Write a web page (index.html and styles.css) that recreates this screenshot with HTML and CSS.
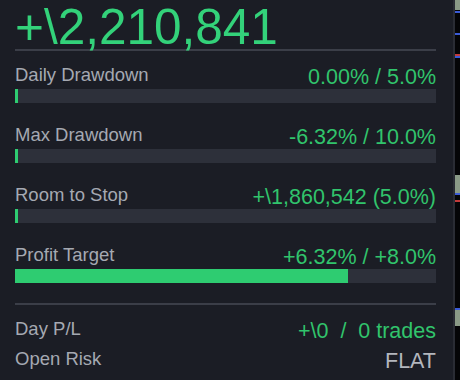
FILE: index.html
```html
<!DOCTYPE html>
<html lang="en">

<head>
    <meta charset="UTF-8">
    <meta name="viewport" content="width=device-width, initial-scale=1.0">
    <title>Account Risk</title>
    <link rel="stylesheet" href="styles.css">
</head>

<body>
    <div class="screen">
        <section class="panel">
            <div class="balance">+\2,210,841</div>
            <div class="rule rule-top"></div>

            <div class="meters">
                <div class="meter">
                    <div class="meter-head">
                        <span class="label">Daily Drawdown</span>
                        <span class="value">0.00% / 5.0%</span>
                    </div>
                    <div class="track"><div class="fill" style="width:0%"></div></div>
                </div>

                <div class="meter">
                    <div class="meter-head">
                        <span class="label">Max Drawdown</span>
                        <span class="value">-6.32% / 10.0%</span>
                    </div>
                    <div class="track"><div class="fill" style="width:0%"></div></div>
                </div>

                <div class="meter">
                    <div class="meter-head">
                        <span class="label">Room to Stop</span>
                        <span class="value">+\1,860,542 (5.0%)</span>
                    </div>
                    <div class="track"><div class="fill" style="width:0%"></div></div>
                </div>

                <div class="meter">
                    <div class="meter-head">
                        <span class="label">Profit Target</span>
                        <span class="value">+6.32% / +8.0%</span>
                    </div>
                    <div class="track"><div class="fill" style="width:79%"></div></div>
                </div>
            </div>

            <div class="rule rule-bottom"></div>

            <div class="stats">
                <div class="stat">
                    <span class="label">Day P/L</span>
                    <span class="value">+\0&nbsp;&nbsp;/&nbsp;&nbsp;0 trades</span>
                </div>
                <div class="stat">
                    <span class="label">Open Risk</span>
                    <span class="value muted">FLAT</span>
                </div>
            </div>
        </section>

        <!-- edge of the price chart next to the panel -->
        <aside class="chart-edge">
            <span class="tick box" style="top:0;height:10px"></span>
            <span class="tick blue" style="top:11px"></span>
            <span class="tick blue" style="top:33px"></span>
            <span class="tick red" style="top:54px"></span>
            <span class="tick blue" style="top:56px"></span>
            <span class="tick box" style="top:175px;height:18px"></span>
            <span class="tick blue" style="top:193px"></span>
            <span class="tick red" style="top:200px"></span>
            <span class="tick blue" style="top:308px"></span>
            <span class="tick box" style="top:310px;height:16px"></span>
        </aside>
    </div>
</body>

</html>
```

FILE: styles.css
```css
body {
    margin: 0;
    background: #050507;
    font-family: 'Liberation Sans', Arial, sans-serif;
}

.screen {
    display: flex;
    height: 380px;
    overflow: hidden;
}

.panel {
    width: 453px;
    box-sizing: border-box;
    padding: 5px 17px 0 15px;
    background: #1b1d25;
}

.balance {
    font-size: 49.5px;
    line-height: 44px;
    color: #33d27a;
}

.rule {
    height: 2px;
    background: #3b3e48;
}

.rule-top {
    margin-bottom: 14px;
}

.rule-bottom {
    margin-top: 20px;
    margin-bottom: 14px;
}

.meters {
    display: flex;
    flex-direction: column;
    gap: 22px;
}

.meter-head,
.stat {
    display: flex;
    justify-content: space-between;
    align-items: flex-start;
    height: 24px;
}

.label {
    font-size: 18.5px;
    line-height: 20px;
    color: #a5a9b2;
}

.value {
    font-size: 21.5px;
    line-height: 24px;
    color: #31c46c;
}

.value.muted {
    color: #b3b6bd;
}

.track {
    height: 14px;
    background: #2d303a;
}

.fill {
    height: 100%;
    min-width: 3px;
    background: #2ecc71;
}

.stats {
    display: flex;
    flex-direction: column;
    gap: 6px;
}

.chart-edge {
    position: relative;
    flex: 1;
    border-left: 2px solid #2a2c34;
    background: #050507;
}

.tick {
    position: absolute;
    left: 0;
    right: 0;
    height: 2px;
}

.tick.box {
    background: #8a9a86;
}

.tick.blue {
    background: #3b5bd6;
}

.tick.red {
    background: #c23a3a;
}
```
